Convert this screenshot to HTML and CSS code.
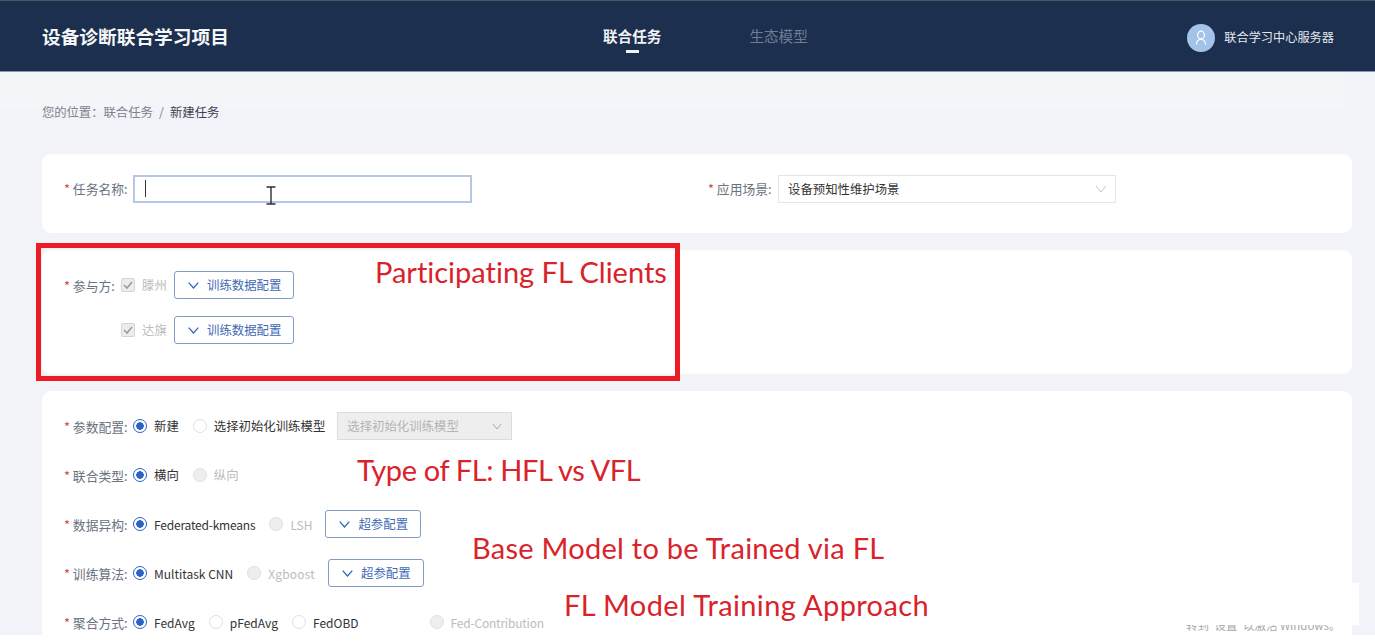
FILE: index.html
```html
<!DOCTYPE html>
<html lang="zh-CN">
<head>
  <meta charset="UTF-8">
  <title>设备诊断联合学习项目</title>
  <link rel="stylesheet" href="styles.css">
</head>
<body>
  <div class="page">
    <header class="topbar">
      <div class="brand">设备诊断联合学习项目</div>
      <nav class="nav">
        <a class="nav-item active">联合任务</a>
        <a class="nav-item">生态模型</a>
      </nav>
      <div class="user">
        <span class="avatar">
          <svg width="14" height="16" viewBox="0 0 14 16" fill="none" stroke="#fff" stroke-width="1.2"><ellipse cx="7" cy="5" rx="3.4" ry="3.8"/><path d="M2.5 14.5c0-3.2 1.8-5 4.5-5s4.500 1.800 4.500 5"/></svg>
        </span>
        <span>联合学习中心服务器</span>
      </div>
    </header>

    <main class="content">
      <div class="crumbs"><span class="where">您的位置：</span>联合任务<i>/</i><b>新建任务</b></div>

      <section class="card card-name">
        <div class="field field-name">
          <label class="label"><em>*</em> 任务名称:</label>
          <div class="input focused"><span class="caret"></span></div>
        </div>
        <div class="field field-scene">
          <label class="label label-scene"><em>*</em> 应用场景:</label>
          <div class="select">设备预知性维护场景
            <svg class="chev" width="12" height="8" viewBox="0 0 12 8" fill="none" stroke="#c0c4cc"><path d="M1 1l5 6 5-6"/></svg>
          </div>
        </div>
      </section>

      <section class="card card-clients">
        <div class="row">
          <label class="label label-short"><em>*</em> 参与方:</label>
          <span class="check"><svg width="10" height="8" viewBox="0 0 10 8" fill="none" stroke="#9a9a9a" stroke-width="1.6"><path d="M1 4l3 3 5-6"/></svg></span>
          <span class="muted client">滕州</span>
          <button class="btn btn-wide"><svg width="11" height="7" viewBox="0 0 11 7" fill="none" stroke="#2f62b5" stroke-width="1.200"><path d="M.7.7l4.800 5.300L10.300.7"/></svg>训练数据配置</button>
        </div>
        <div class="row row-indent">
          <span class="check"><svg width="10" height="8" viewBox="0 0 10 8" fill="none" stroke="#9a9a9a" stroke-width="1.6"><path d="M1 4l3 3 5-6"/></svg></span>
          <span class="muted client">达旗</span>
          <button class="btn btn-wide"><svg width="11" height="7" viewBox="0 0 11 7" fill="none" stroke="#2f62b5" stroke-width="1.200"><path d="M.7.7l4.800 5.300L10.300.7"/></svg>训练数据配置</button>
        </div>
      </section>

      <section class="card card-params">
        <div class="param">
          <label class="label"><em>*</em> 参数配置:</label>
          <span class="radio on"></span><span class="opt">新建</span>
          <span class="radio"></span><span class="opt">选择初始化训练模型</span>
          <div class="select disabled">选择初始化训练模型
            <svg class="chev" width="10" height="7" viewBox="0 0 10 7" fill="none" stroke="#a8a8a8"><path d="M1 1l4 5 4-5"/></svg>
          </div>
        </div>
        <div class="param">
          <label class="label"><em>*</em> 联合类型:</label>
          <span class="radio on"></span><span class="opt">横向</span>
          <span class="radio off"></span><span class="opt muted">纵向</span>
        </div>
        <div class="param">
          <label class="label"><em>*</em> 数据异构:</label>
          <span class="radio on"></span><span class="opt en tight">Federated-kmeans</span>
          <span class="radio off"></span><span class="opt en muted">LSH</span>
          <button class="btn"><svg width="11" height="7" viewBox="0 0 11 7" fill="none" stroke="#2f62b5" stroke-width="1.200"><path d="M.7.7l4.800 5.300L10.300.7"/></svg>超参配置</button>
        </div>
        <div class="param">
          <label class="label"><em>*</em> 训练算法:</label>
          <span class="radio on"></span><span class="opt en">Multitask CNN</span>
          <span class="radio off"></span><span class="opt en muted wide">Xgboost</span>
          <button class="btn"><svg width="11" height="7" viewBox="0 0 11 7" fill="none" stroke="#2f62b5" stroke-width="1.200"><path d="M.7.7l4.800 5.300L10.300.7"/></svg>超参配置</button>
        </div>
        <div class="param">
          <label class="label"><em>*</em> 聚合方式:</label>
          <span class="radio on"></span><span class="opt en">FedAvg</span>
          <span class="radio"></span><span class="opt en">pFedAvg</span>
          <span class="radio"></span><span class="opt en">FedOBD</span>
          <span class="radio off gap-left"></span><span class="opt en muted tight">Fed-Contribution</span>
        </div>
      </section>
    </main>

    <!-- annotations on top of the screenshot -->
    <svg class="ibeam" width="12" height="19" viewBox="0 0 12 19" fill="none" stroke="#2b2f36" stroke-width="1.400"><path d="M1.500 1h9M6 1v17M1.500 18h9"/></svg>
    <div class="red-box"></div>
    <div class="note note-clients">Participating FL Clients</div>
    <div class="note note-type">Type of FL: HFL vs VFL</div>
    <div class="note note-base">Base Model to be Trained via FL</div>
    <div class="note note-approach">FL Model Training Approach</div>
    <div class="watermark-text">转到"设置"以激活 Windows。</div>
    <div class="patch"></div>
  </div>
</body>
</html>
```

FILE: styles.css
```css
* {
  margin: 0;
  padding: 0;
  box-sizing: border-box;
}

html, body {
  background: #fff;
}

body {
  font-family: "Noto Sans CJK SC", "Liberation Sans", sans-serif;
  font-size: 12.4px;
  color: #333;
  height: 641px;
  overflow: hidden;
}

.page {
  position: relative;
  width: 1375px;
  height: 635px;
  overflow: hidden;
  background: #f2f3f8;
}

/* top bar */
.topbar {
  height: 72px;
  display: flex;
  align-items: center;
  padding: 0 41px 2px 42px;
  background: #1c2f4e;
  border-top: 1px solid #4a5766;
  border-bottom: 1px solid #8b97a8;
  color: #fff;
}

.brand {
  width: 561px;
  font-size: 18.7px;
  font-weight: 700;
  color: #f4f6f8;
}

.nav {
  display: flex;
  gap: 88px;
}

.nav-item {
  position: relative;
  font-size: 14.6px;
  color: #6f7d92;
}

.nav-item.active {
  color: #f2f4f7;
  font-weight: 700;
}

.nav-item.active::after {
  content: "";
  position: absolute;
  left: 23px;
  bottom: -7px;
  width: 13px;
  height: 3px;
  background: #f2f4f7;
}

.user {
  margin: 4px 0 0 auto;
  display: flex;
  align-items: center;
  gap: 9px;
  font-size: 12.2px;
  color: #e6eaf0;
}

.avatar {
  margin-top: 2px;
  width: 28px;
  height: 28px;
  border-radius: 50%;
  background: #a3c3e8;
  display: flex;
  align-items: center;
  justify-content: center;
}

/* main */
.content {
  padding: 0 23px 0 42px;
  background: linear-gradient(#f4f5f9, #f4f5f9) no-repeat 0 0 / 1345px 38px;
}

.crumbs {
  height: 82px;
  padding-top: 31px;
  line-height: 18px;
  color: #7d828c;
}

.where {
  letter-spacing: -.1px;
}

.crumbs i {
  font-style: normal;
  margin: 0 6px;
}

.crumbs b {
  font-weight: 400;
  color: #3c4250;
}

.card {
  background: #fff;
  border-radius: 9px;
  margin-bottom: 17px;
}

.card-name {
  height: 79px;
  display: flex;
  align-items: flex-start;
  padding: 21px 0 0 22px;
}

.card-clients {
  height: 124px;
  padding: 21px 0 0 22px;
}

.card-params {
  height: 260px;
  padding: 21px 0 0 22px;
}

.field {
  display: flex;
  align-items: center;
}

.field-name {
  width: 644px;
}

.label {
  flex: none;
  width: 64px;
  font-size: 12.8px;
  color: #6b7280;
  margin-right: 5px;
  white-space: nowrap;
}

.field .label {
  margin-bottom: 2px;
}

.label-scene {
  width: 65px;
}

.label-short {
  width: 52px;
}

.label em {
  font-style: normal;
  color: #c8443f;
}

.input {
  width: 339px;
  height: 28px;
  padding: 3px 10px;
  border: 2px solid #b5c8e3;
  background: #fff;
}

.caret {
  display: block;
  width: 1px;
  height: 17px;
  background: #333;
}

.select {
  position: relative;
  width: 338px;
  height: 28px;
  line-height: 26px;
  padding-left: 9px;
  border: 1px solid #e3e5e8;
  color: #333;
}

.chev {
  position: absolute;
  right: 8px;
  top: 9px;
}

.select.disabled {
  width: 175px;
  margin-left: -2px;
  background: #eeeeee;
  border-color: #dcdcdc;
  color: #b4b4b4;
}

.select.disabled .chev {
  right: 9px;
  top: 10px;
}

.row {
  display: flex;
  align-items: center;
  height: 28px;
  margin-bottom: 17px;
}

.row-indent {
  padding-left: 57px;
}

.check {
  width: 14px;
  height: 14px;
  border: 1px solid #d5d5d5;
  border-radius: 2px;
  background: #ececec;
  display: flex;
  align-items: center;
  justify-content: center;
}

.muted {
  color: #bcbcbc;
}

.client {
  width: 25px;
  margin: 0 7px;
  white-space: nowrap;
}

.btn {
  display: inline-flex;
  align-items: center;
  gap: 8px;
  height: 28px;
  padding: 0 12px 0 13px;
  font: inherit;
  white-space: nowrap;
  color: #3f69b5;
  background: #fff;
  border: 1px solid #7f9cc7;
  border-radius: 3px;
}

.btn-wide {
  width: 120px;
  padding-right: 0;
}

.param {
  display: flex;
  align-items: center;
  height: 28px;
  margin-bottom: 21px;
}

.param .btn {
  margin-left: -1px;
}

.radio {
  width: 14px;
  height: 14px;
  border-radius: 50%;
  border: 1px solid #dcdfe6;
  background: #fff;
  flex: none;
}

.radio.on {
  border: 1px solid #2b63c4;
  background: radial-gradient(circle, #2b63c4 0 3.500px, #fff 4px);
}

.radio.off {
  background: #eeeeee;
}

.opt {
  margin: 0 14px 0 7px;
  white-space: nowrap;
  color: #333;
}

.opt.en {
  font-size: 12px;
}

.opt.tight {
  letter-spacing: -.2px;
}

.opt.wide {
  letter-spacing: .2px;
}

.opt.muted {
  color: #bcbcbc;
}

.gap-left {
  margin-left: 57px;
}

/* annotations */
.ibeam {
  position: absolute;
  left: 265px;
  top: 186px;
}

.red-box {
  position: absolute;
  left: 36px;
  top: 243px;
  width: 644px;
  height: 138px;
  border: 5px solid #ed1c24;
}

.note {
  position: absolute;
  font-family: "Lato", "Liberation Sans", sans-serif;
  font-size: 29px;
  line-height: 34px;
  color: #d9232b;
  white-space: nowrap;
  font-variant-ligatures: none;
}

.note-clients { left: 375px; top: 255px; }
.note-type { left: 357px; top: 453px; letter-spacing: -.37px; }
.note-base { left: 472px; top: 531px; letter-spacing: .26px; }
.note-approach { left: 564px; top: 588px; letter-spacing: .38px; }

.watermark-text {
  position: absolute;
  left: 1186px;
  top: 617px;
  font-size: 11.5px;
  color: #a8a8a8;
  white-space: nowrap;
}

.patch {
  position: absolute;
  left: 1178px;
  top: 583px;
  width: 181px;
  height: 42px;
  background: #fff;
}
```
